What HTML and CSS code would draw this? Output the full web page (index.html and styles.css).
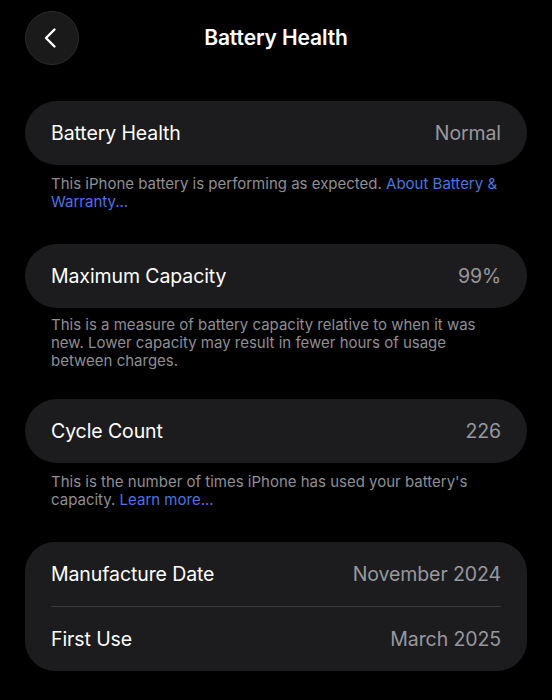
FILE: index.html
```html
<!DOCTYPE html>
<html>
<head>
<meta charset="utf-8">
<link rel="stylesheet" href="styles.css">
</head>
<body>
<header class="nav">
  <button class="back" aria-label="Back">
    <svg width="22" height="24" viewBox="0 0 22 24"><path d="M14.5 3.5 L6 12 L14.5 20.5" fill="none" stroke="#fff" stroke-width="2.4" stroke-linecap="round" stroke-linejoin="round"/></svg>
  </button>
  <h1 class="title">Battery Health</h1>
</header>
<main class="content">
  <section class="group">
    <div class="card pill">
      <div class="row"><span class="label">Battery Health</span><span class="value">Normal</span></div>
    </div>
    <p class="note">This iPhone battery is performing as expected. <span class="link">About Battery &amp; Warranty...</span></p>
  </section>
  <section class="group group-tight">
    <div class="card pill">
      <div class="row"><span class="label">Maximum Capacity</span><span class="value">99%</span></div>
    </div>
    <p class="note note-tight">This is a measure of battery capacity relative to when it was new. Lower capacity may result in fewer hours of usage between charges.</p>
  </section>
  <section class="group">
    <div class="card pill">
      <div class="row"><span class="label">Cycle Count</span><span class="value">226</span></div>
    </div>
    <p class="note">This is the number of times iPhone has used your battery's capacity. <span class="link">Learn more...</span></p>
  </section>
  <section class="group">
    <div class="card multi">
      <div class="row"><span class="label">Manufacture Date</span><span class="value">November 2024</span></div>
      <div class="divider"></div>
      <div class="row"><span class="label">First Use</span><span class="value">March 2025</span></div>
    </div>
  </section>
</main>
</body>
</html>
```
FILE: styles.css
```css
* { box-sizing: border-box; }
html, body { margin: 0; padding: 0; background: #000; }
body {
  font-family: Inter, "Noto Sans", sans-serif;
  color: #fff;
  width: 552px;
  height: 700px;
  overflow: hidden;
}
.nav {
  position: relative;
  height: 101px;
  padding: 11px 25px 0;
}
.back {
  width: 54px;
  height: 54px;
  border-radius: 50%;
  background: #1a1a1a;
  border: 1px solid #2c2c2e;
  display: flex;
  align-items: center;
  justify-content: center;
  padding: 0 2px 0 0;
}
.title {
  position: absolute;
  left: 0;
  right: 0;
  top: 24px;
  margin: 0;
  text-align: center;
  font-size: 21px;
  font-weight: 600;
  line-height: 28px;
  letter-spacing: -0.1px;
}
.content {
  padding: 0 25px;
}
.group {
  margin-bottom: 33px;
}
.group-tight {
  margin-bottom: 29px;
}
.card {
  background: #1c1c1e;
}
.pill {
  border-radius: 32px;
}
.multi {
  border-radius: 30px;
}
.row {
  height: 64px;
  padding: 0 26px;
  display: flex;
  align-items: center;
  justify-content: space-between;
  font-size: 19.5px;
}
.label { color: #fff; letter-spacing: -0.1px; }
.value { color: #98989e; letter-spacing: -0.1px; }
.divider {
  height: 1px;
  background: #3a3a3c;
  margin: 0 26px;
}
.note {
  margin: 10px 0 0;
  padding: 0 26px;
  font-size: 15px;
  line-height: 18px;
  color: #8e8e93;
}
.note-tight {
  margin-top: 8px;
}
.link { color: #4a74e0; }
```
